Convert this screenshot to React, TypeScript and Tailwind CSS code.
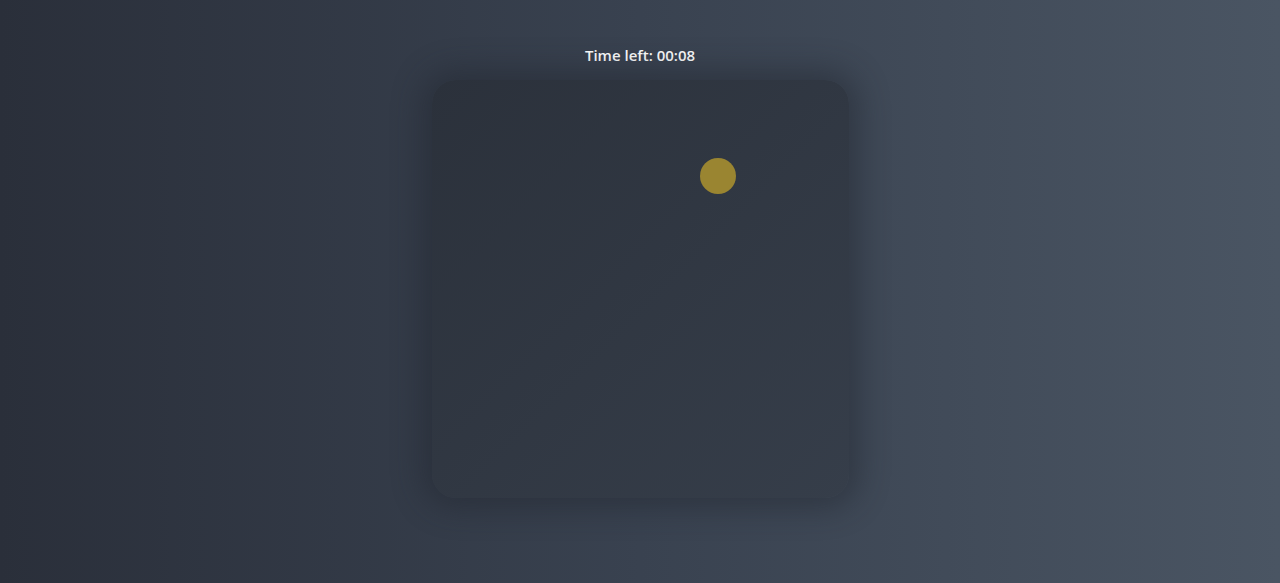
import React from 'react';

const App = () => {
  return (
    <div className="min-h-[583px] w-full bg-linear-to-r from-[#2a2f3a] via-[#394250] to-[#4a5563] font-['Open_Sans',sans-serif]">
      <div className="flex flex-col items-center pt-[45px]">
        <h1 className="text-[15px] font-semibold text-white leading-5">Time left: 00:08</h1>
        <div className="relative mt-[15px] h-[418px] w-[417px] overflow-hidden rounded-3xl bg-linear-to-br from-[#2b313b] to-[#363e4a] shadow-[0_0_30px_10px_rgba(30,35,45,0.45)]">
          <div className="absolute left-[268px] top-[78px] h-9 w-9 rounded-full bg-[#9a8531]" />
        </div>
      </div>
    </div>
  );
};

export default App;
